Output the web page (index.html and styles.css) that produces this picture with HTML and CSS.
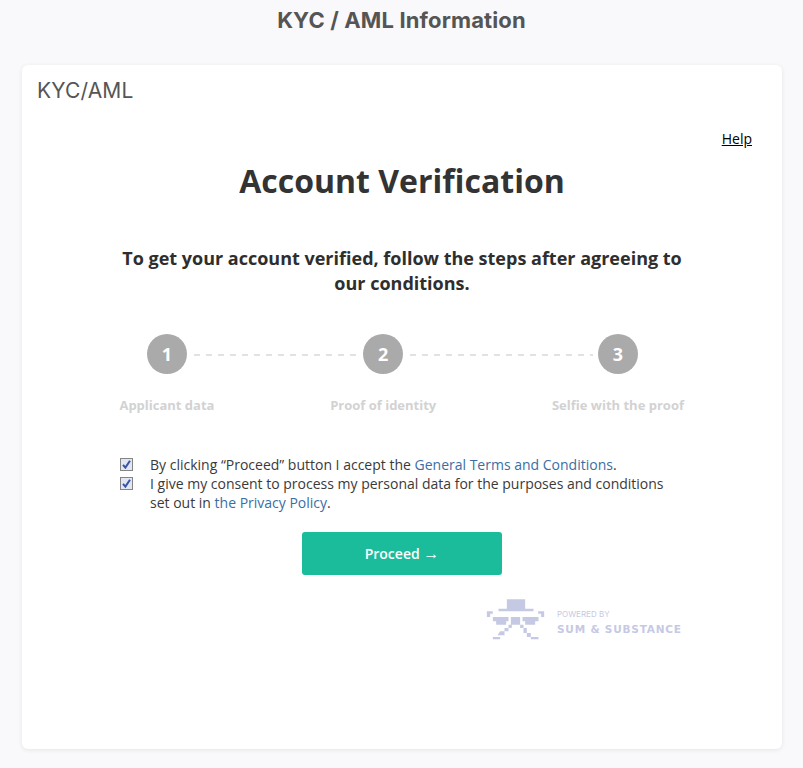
FILE: index.html
```html
<!DOCTYPE html>
<html lang="en">
<head>
<meta charset="utf-8">
<title>KYC / AML Information</title>
<link rel="stylesheet" href="styles.css">
</head>
<body>
<h1 class="page-title">KYC / AML Information</h1>
<main class="card">
  <div class="card-head">KYC/AML</div>
  <div class="help-row"><a class="help" href="#">Help</a></div>
  <h2 class="heading">Account Verification</h2>
  <p class="lead">To get your account verified, follow the steps after agreeing to our conditions.</p>
  <ol class="steps">
    <li class="step"><span class="num">1</span><span class="label">Applicant data</span></li>
    <li class="step"><span class="num">2</span><span class="label">Proof of identity</span></li>
    <li class="step"><span class="num">3</span><span class="label">Selfie with the proof</span></li>
  </ol>
  <div class="agreements">
    <div class="agree">
      <span class="check"><svg viewBox="0 0 9 9" width="9" height="9"><path d="M1 4.8 3.4 7.6 8 .8" fill="none" stroke="#3355aa" stroke-width="2"/></svg></span>
      <span>By clicking “Proceed” button I accept the <a class="link" href="#">General Terms and Conditions</a>.</span>
    </div>
    <div class="agree">
      <span class="check"><svg viewBox="0 0 9 9" width="9" height="9"><path d="M1 4.8 3.4 7.6 8 .8" fill="none" stroke="#3355aa" stroke-width="2"/></svg></span>
      <span>I give my consent to process my personal data for the purposes and conditions set out in <a class="link" href="#">the Privacy Policy</a>.</span>
    </div>
  </div>
  <div class="action"><button class="proceed" type="button">Proceed <span class="arrow">→</span></button></div>
  <div class="powered">
    <svg class="mark" viewBox="45 38 185 132" width="62" height="44" aria-hidden="true">
      <path fill="#c6c9e4" d="M110 42h55v28h25v8H85v-8h25zM50 78h18v7h-8v10H50zM222 78h-18v7h9v10h9zM68 95h47v13h-7v10H78v-10H68zM205 95h-48v13h8v10h30v-10h10zM122 95h28v23h-28zM115 118h10v10h-10zM103 128h12v10h-12zM90 138h13v12H90v5H68v7h22v-12h-8zM150 118h10v10h-10zM160 128h10v15h-10zM170 143h12v12h-12zM182 155h23v7h-23z"/>
    </svg>
    <div class="powered-text">
      <span class="powered-by">POWERED BY</span>
      <span class="brand">SUM &amp; SUBSTANCE</span>
    </div>
  </div>
</main>
</body>
</html>
```

FILE: styles.css
```css
* { box-sizing: border-box; }
html, body { margin: 0; padding: 0; }
body {
  width: 803px;
  height: 768px;
  overflow: hidden;
  background: #f9f9fb;
  font-family: "Open Sans", sans-serif;
  color: #3a3a3a;
}
.page-title {
  margin: 0;
  height: 65px;
  padding-top: 6px;
  text-align: center;
  font-family: "Inter", sans-serif;
  font-size: 22px;
  line-height: 29px;
  font-weight: 700;
  letter-spacing: 0.15px;
  color: #555;
}
.card {
  width: 760px;
  height: 684px;
  margin-left: 22px;
  padding: 0 98px;
  background: #fff;
  border-radius: 6px;
  box-shadow: 0 1px 4px rgba(60, 60, 90, 0.1);
}
.card-head {
  margin: 0 -83px;
  padding-top: 12px;
  height: 60px;
  font-family: "Inter", sans-serif;
  font-size: 21px;
  line-height: 28px;
  letter-spacing: 0.15px;
  color: #555;
}
.help-row {
  display: flex;
  justify-content: flex-end;
  margin-right: -68px;
  height: 28px;
  padding-top: 4px;
}
.help {
  font-size: 14px;
  line-height: 19px;
  color: #000;
}
.heading {
  margin: 0;
  padding-top: 6px;
  text-align: center;
  font-size: 32px;
  line-height: 44px;
  font-weight: 700;
  color: #333;
}
.lead {
  margin: 43px 0 0;
  text-align: center;
  font-size: 18px;
  line-height: 25px;
  font-weight: 700;
  color: #2e2e2e;
}
.steps {
  position: relative;
  display: flex;
  justify-content: space-between;
  list-style: none;
  margin: 38px 0 0 -0.6px;
  padding: 0;
}
.steps::before {
  content: "";
  position: absolute;
  left: 50.6px;
  right: 67px;
  top: 20px;
  height: 2px;
  background: repeating-linear-gradient(90deg, #e2e2e2 0 6px, transparent 6px 12px);
}
.step {
  position: relative;
  display: flex;
  flex-direction: column;
  align-items: center;
  gap: 22px;
}
.num {
  width: 40px;
  height: 40px;
  border-radius: 50%;
  background: #aaa;
  box-shadow: 0 0 0 5px #fff;
  color: #fff;
  font-size: 18px;
  line-height: 40px;
  font-weight: 700;
  text-align: center;
}
.label {
  font-size: 13px;
  line-height: 18px;
  font-weight: 700;
  color: #d2d2d2;
}
.agreements {
  margin-top: 41px;
  display: flex;
  flex-direction: column;
}
.agree {
  display: flex;
  gap: 17px;
  font-size: 14px;
  line-height: 19px;
  color: #3a3a3a;
}
.check {
  flex: none;
  display: flex;
  align-items: center;
  justify-content: center;
  width: 13px;
  height: 13px;
  margin-top: 3px;
  border: 1px solid #858585;
  background: #e2e5f2;
}
.link {
  color: #3a6ea5;
  text-decoration: none;
}
.action {
  display: flex;
  justify-content: center;
  margin-top: 20px;
}
.proceed {
  width: 200px;
  height: 43px;
  border: 0;
  border-radius: 3px;
  background: #1abc9c;
  color: #fff;
  font-family: "Open Sans", sans-serif;
  font-size: 14px;
  font-weight: 600;
}
.arrow {
  font-family: "Liberation Sans", sans-serif;
  font-size: 16px;
  font-weight: 400;
}
.powered {
  display: flex;
  justify-content: flex-end;
  align-items: center;
  gap: 10px;
  margin-top: 23px;
  padding-right: 4px;
}
.mark { display: block; }
.powered-text {
  display: flex;
  flex-direction: column;
  width: 123px;
  padding-top: 4px;
  color: #c6c9e4;
  white-space: nowrap;
}
.powered-by {
  font-family: "Inter", sans-serif;
  font-size: 8px;
  line-height: 10px;
}
.brand {
  margin-top: 4px;
  font-family: "DejaVu Sans", sans-serif;
  font-size: 10.5px;
  line-height: 13px;
  font-weight: 700;
  letter-spacing: 0.8px;
}
```
